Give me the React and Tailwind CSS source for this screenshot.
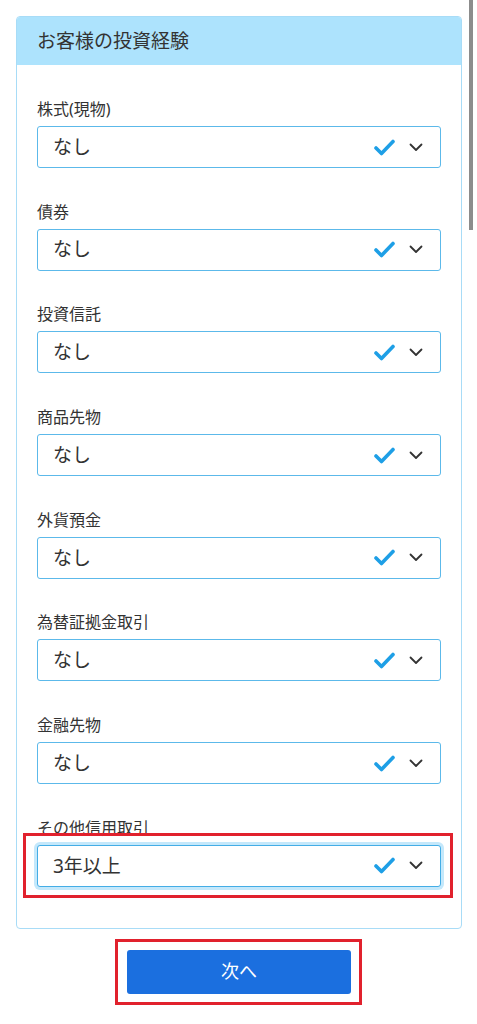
import React from "react";

const fields = [
  { label: "株式(現物)", value: "なし" },
  { label: "債券", value: "なし" },
  { label: "投資信託", value: "なし" },
  { label: "商品先物", value: "なし" },
  { label: "外貨預金", value: "なし" },
  { label: "為替証拠金取引", value: "なし" },
  { label: "金融先物", value: "なし" },
  { label: "その他信用取引", value: "3年以上", focused: true },
];

const Check = () => (
  <svg width="21" height="17" viewBox="0 0 21 17" fill="none">
    <path
      d="M2 9 L7.5 14.5 L19 2.5"
      stroke="#1e9fe6"
      strokeWidth="3.6"
      strokeLinecap="round"
      strokeLinejoin="round"
    />
  </svg>
);

const Chevron = () => (
  <svg width="14" height="9" viewBox="0 0 14 9" fill="none">
    <path
      d="M1.5 1.5 L7 7 L12.5 1.5"
      stroke="#333"
      strokeWidth="1.8"
      strokeLinecap="round"
      strokeLinejoin="round"
    />
  </svg>
);

const Field = ({ label, value, focused }) => {
  return (
    <div className="relative">
      <p className="text-[16px] leading-[22px] text-[#333] mb-[6px]">{label}</p>
      <div
        className={`flex items-center h-[42px] rounded-[3px] border bg-white pl-[15px] pr-[17px] ${
          focused
            ? "border-[#44ade6] shadow-[0_0_0_3px_#c4e8fb]"
            : "border-[#5cb9ea]"
        }`}
      >
        <span className="flex-1 text-[19px] text-[#333]">{value}</span>
        <Check />
        <span className="ml-[14px] flex">
          <Chevron />
        </span>
      </div>
      {focused && (
        <div className="absolute left-[-14px] right-[-12px] top-[16px] bottom-[-11px] border-[3px] border-[#e1212d] pointer-events-none" />
      )}
    </div>
  );
};

export default function App() {
  return (
    <div
      className="relative min-h-[1024px] bg-white px-4 pt-4 pr-[15px]"
      style={{ fontFamily: '"Noto Sans", "Noto Sans CJK JP", sans-serif' }}
    >
      <div className="rounded-[4px] border border-[#a8dcf7] bg-white overflow-hidden">
        <div className="h-[48px] bg-[#ade3fd] flex items-center px-5">
          <h1 className="text-[19px] text-[#333]">お客様の投資経験</h1>
        </div>
        <div className="px-5 pt-[33px] pb-[41px] flex flex-col gap-[32.7px]">
          {fields.map((f, i) => (
            <Field key={i} {...f} />
          ))}
        </div>
      </div>

      <div className="flex justify-center mt-[21px]">
        <div className="relative">
          <button className="w-[224px] h-[44px] rounded-[3px] bg-[#1b6fdf] text-white text-[18px]">
            次へ
          </button>
          <div className="absolute left-[-12px] right-[-11px] top-[-11px] bottom-[-11px] border-[3px] border-[#e1212d] pointer-events-none" />
        </div>
      </div>

      <div className="absolute top-0 right-[4px] w-[4px] h-[230px] bg-[#8c8c8c]" />
    </div>
  );
}
